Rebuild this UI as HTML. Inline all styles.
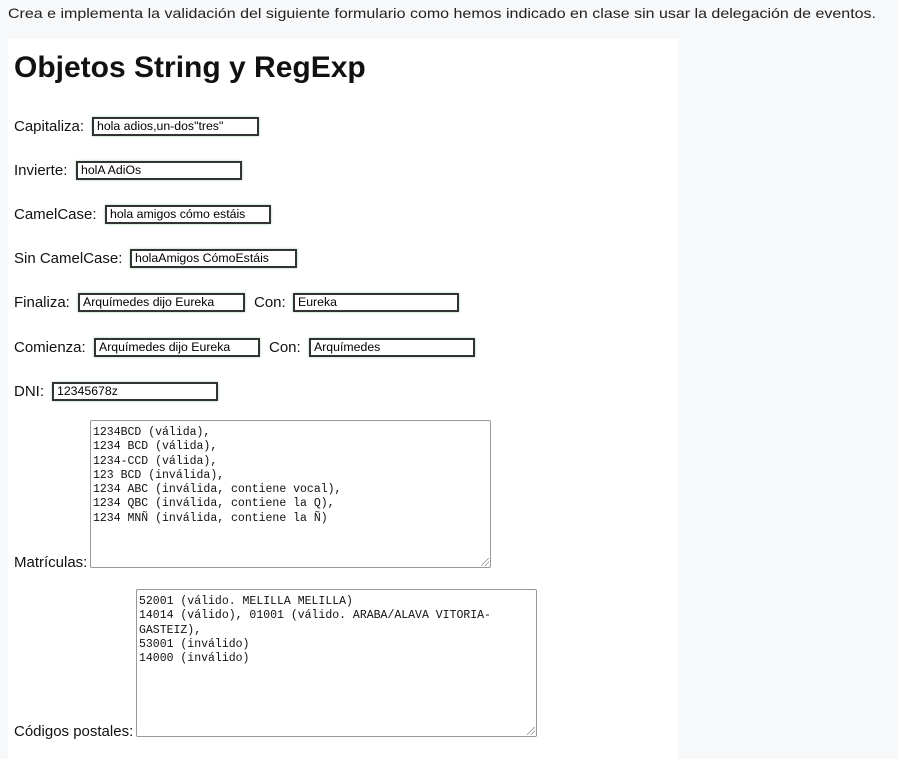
<!DOCTYPE html>
<html><head><meta charset="utf-8"><style>
*{margin:0;padding:0;box-sizing:border-box}
body{width:898px;height:749px;background:#f7f8fa;position:relative;overflow:hidden;font-family:"Liberation Sans",Arial,sans-serif;}
.panel{position:absolute;left:8px;top:39px;width:670px;height:720px;background:#fff}
.a{position:absolute}
.lbl{position:absolute;font-size:15px;color:#111;line-height:19px}
.in{position:absolute;height:19px;border:2px solid #333;box-shadow:0 0 2px #9c9;background:#fff;font-size:12.3px;line-height:15px;padding-left:3px;color:#000;white-space:nowrap;overflow:hidden}
.ta{position:absolute;border:1px solid #999;border-radius:2px;background:#fff;font-family:"Liberation Mono","DejaVu Sans Mono",monospace;font-size:11.5px;line-height:14.3px;padding:5px 2px;color:#111;white-space:pre}
.grip{position:absolute;right:1px;bottom:1px;width:8px;height:8px;background:linear-gradient(135deg,transparent 45%,#888 46%,#888 52%,transparent 53%,transparent 70%,#888 71%,#888 77%,transparent 78%)}
</style></head><body>
<svg class="a" style="left:0;top:0" width="898" height="30"><text x="8" y="18" font-family="Liberation Sans, sans-serif" font-size="14" fill="#222" textLength="868" lengthAdjust="spacingAndGlyphs">Crea e implementa la validación del siguiente formulario como hemos indicado en clase sin usar la delegación de eventos.</text></svg>
<div class="panel"></div>
<div class="a" style="left:14px;top:50px;font-size:30px;font-weight:bold;color:#111;line-height:36px">Objetos String y RegExp</div>

<div class="lbl" style="left:14px;top:117px">Capitaliza:</div>
<div class="in" style="left:92px;top:117px;width:167px">hola adios,un-dos"tres"</div>

<div class="lbl" style="left:14px;top:161px">Invierte:</div>
<div class="in" style="left:76px;top:161px;width:166px">holA AdiOs</div>

<div class="lbl" style="left:14px;top:205px">CamelCase:</div>
<div class="in" style="left:105px;top:205px;width:166px">hola amigos cómo estáis</div>

<div class="lbl" style="left:14px;top:249px">Sin CamelCase:</div>
<div class="in" style="left:130px;top:249px;width:167px">holaAmigos CómoEstáis</div>

<div class="lbl" style="left:14px;top:293px">Finaliza:</div>
<div class="in" style="left:78px;top:293px;width:167px">Arquímedes dijo Eureka</div>
<div class="lbl" style="left:254px;top:293px">Con:</div>
<div class="in" style="left:293px;top:293px;width:166px">Eureka</div>

<div class="lbl" style="left:14px;top:338px">Comienza:</div>
<div class="in" style="left:94px;top:338px;width:166px">Arquímedes dijo Eureka</div>
<div class="lbl" style="left:269px;top:338px">Con:</div>
<div class="in" style="left:309px;top:338px;width:166px">Arquímedes</div>

<div class="lbl" style="left:14px;top:382px">DNI:</div>
<div class="in" style="left:52px;top:382px;width:166px">12345678z</div>

<div class="ta" style="left:90px;top:420px;width:401px;height:148px">1234BCD (válida),
1234 BCD (válida),
1234-CCD (válida),
123 BCD (inválida),
1234 ABC (inválida, contiene vocal),
1234 QBC (inválida, contiene la Q),
1234 MNÑ (inválida, contiene la Ñ)<div class="grip"></div></div>
<div class="lbl" style="left:14px;top:553px">Matrículas:</div>

<div class="ta" style="left:136px;top:589px;width:401px;height:148px">52001 (válido. MELILLA MELILLA)
14014 (válido), 01001 (válido. ARABA/ALAVA VITORIA-
GASTEIZ),
53001 (inválido)
14000 (inválido)<div class="grip"></div></div>
<div class="lbl" style="left:14px;top:722px">Códigos postales:</div>
</body></html>
